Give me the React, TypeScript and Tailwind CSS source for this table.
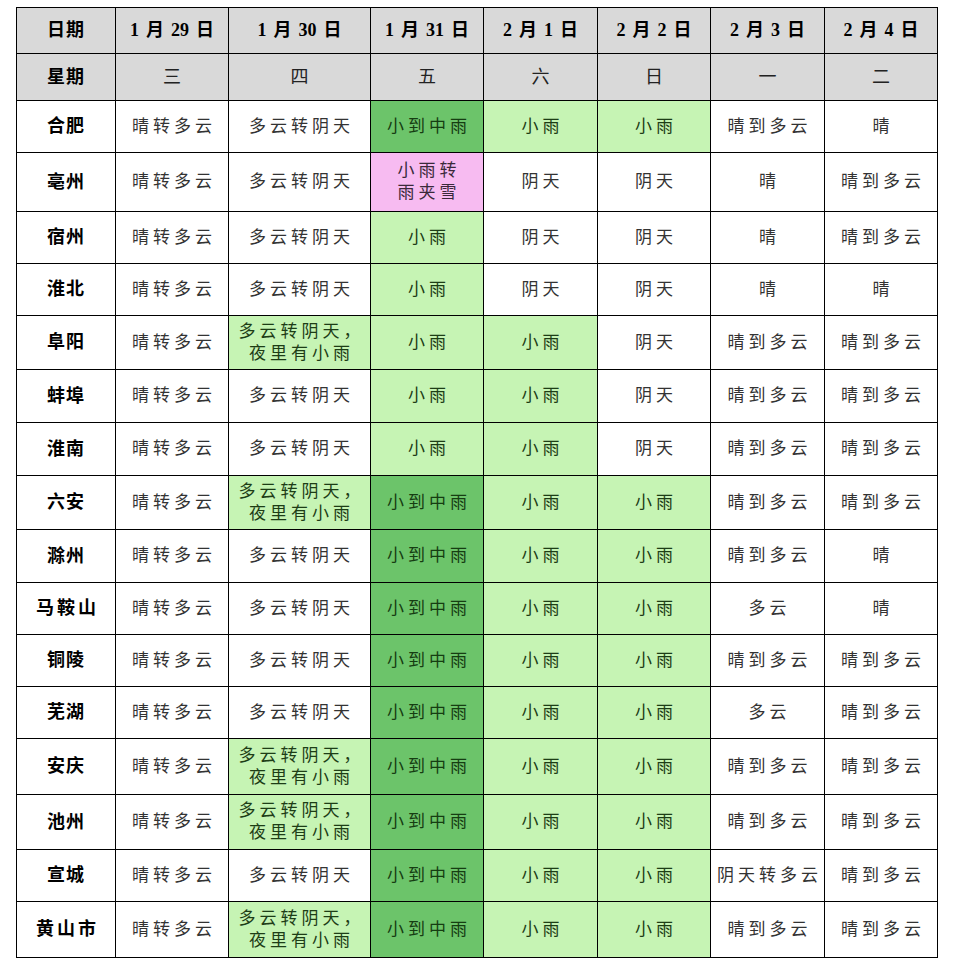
type Tone = 'w' | 'l' | 'd' | 'p';

type Cell = { t: string; tone?: Tone };

const toneClass: Record<Tone, string> = {
  w: 'bg-white text-[#333333]',
  l: 'bg-[#c6f4b4] text-[#1d3d16]',
  d: 'bg-[#6cc46a] text-[#163d12]',
  p: 'bg-[#f7bbf1] text-[#3a2a3a]',
};

const dates = ['1 月 29 日', '1 月 30 日', '1 月 31 日', '2 月 1 日', '2 月 2 日', '2 月 3 日', '2 月 4 日'];
const weekdays = ['三', '四', '五', '六', '日', '一', '二'];

const NIGHT = '多云转阴天，\n夜里有小雨';

const rows: { city: string; h: string; cells: Cell[] }[] = [
  { city: '合肥', h: 'h-[52px]', cells: [{ t: '晴转多云' }, { t: '多云转阴天' }, { t: '小到中雨', tone: 'd' }, { t: '小雨', tone: 'l' }, { t: '小雨', tone: 'l' }, { t: '晴到多云' }, { t: '晴' }] },
  { city: '亳州', h: 'h-[59px]', cells: [{ t: '晴转多云' }, { t: '多云转阴天' }, { t: '小雨转\n雨夹雪', tone: 'p' }, { t: '阴天' }, { t: '阴天' }, { t: '晴' }, { t: '晴到多云' }] },
  { city: '宿州', h: 'h-[52px]', cells: [{ t: '晴转多云' }, { t: '多云转阴天' }, { t: '小雨', tone: 'l' }, { t: '阴天' }, { t: '阴天' }, { t: '晴' }, { t: '晴到多云' }] },
  { city: '淮北', h: 'h-[52px]', cells: [{ t: '晴转多云' }, { t: '多云转阴天' }, { t: '小雨', tone: 'l' }, { t: '阴天' }, { t: '阴天' }, { t: '晴' }, { t: '晴' }] },
  { city: '阜阳', h: 'h-[54px]', cells: [{ t: '晴转多云' }, { t: NIGHT, tone: 'l' }, { t: '小雨', tone: 'l' }, { t: '小雨', tone: 'l' }, { t: '阴天' }, { t: '晴到多云' }, { t: '晴到多云' }] },
  { city: '蚌埠', h: 'h-[53px]', cells: [{ t: '晴转多云' }, { t: '多云转阴天' }, { t: '小雨', tone: 'l' }, { t: '小雨', tone: 'l' }, { t: '阴天' }, { t: '晴到多云' }, { t: '晴到多云' }] },
  { city: '淮南', h: 'h-[53px]', cells: [{ t: '晴转多云' }, { t: '多云转阴天' }, { t: '小雨', tone: 'l' }, { t: '小雨', tone: 'l' }, { t: '阴天' }, { t: '晴到多云' }, { t: '晴到多云' }] },
  { city: '六安', h: 'h-[54px]', cells: [{ t: '晴转多云' }, { t: NIGHT, tone: 'l' }, { t: '小到中雨', tone: 'd' }, { t: '小雨', tone: 'l' }, { t: '小雨', tone: 'l' }, { t: '晴到多云' }, { t: '晴到多云' }] },
  { city: '滁州', h: 'h-[53px]', cells: [{ t: '晴转多云' }, { t: '多云转阴天' }, { t: '小到中雨', tone: 'd' }, { t: '小雨', tone: 'l' }, { t: '小雨', tone: 'l' }, { t: '晴到多云' }, { t: '晴' }] },
  { city: '马鞍山', h: 'h-[52px]', cells: [{ t: '晴转多云' }, { t: '多云转阴天' }, { t: '小到中雨', tone: 'd' }, { t: '小雨', tone: 'l' }, { t: '小雨', tone: 'l' }, { t: '多云' }, { t: '晴' }] },
  { city: '铜陵', h: 'h-[52px]', cells: [{ t: '晴转多云' }, { t: '多云转阴天' }, { t: '小到中雨', tone: 'd' }, { t: '小雨', tone: 'l' }, { t: '小雨', tone: 'l' }, { t: '晴到多云' }, { t: '晴到多云' }] },
  { city: '芜湖', h: 'h-[52px]', cells: [{ t: '晴转多云' }, { t: '多云转阴天' }, { t: '小到中雨', tone: 'd' }, { t: '小雨', tone: 'l' }, { t: '小雨', tone: 'l' }, { t: '多云' }, { t: '晴到多云' }] },
  { city: '安庆', h: 'h-[56px]', cells: [{ t: '晴转多云' }, { t: NIGHT, tone: 'l' }, { t: '小到中雨', tone: 'd' }, { t: '小雨', tone: 'l' }, { t: '小雨', tone: 'l' }, { t: '晴到多云' }, { t: '晴到多云' }] },
  { city: '池州', h: 'h-[55px]', cells: [{ t: '晴转多云' }, { t: NIGHT, tone: 'l' }, { t: '小到中雨', tone: 'd' }, { t: '小雨', tone: 'l' }, { t: '小雨', tone: 'l' }, { t: '晴到多云' }, { t: '晴到多云' }] },
  { city: '宣城', h: 'h-[52px]', cells: [{ t: '晴转多云' }, { t: '多云转阴天' }, { t: '小到中雨', tone: 'd' }, { t: '小雨', tone: 'l' }, { t: '小雨', tone: 'l' }, { t: '阴天转多云' }, { t: '晴到多云' }] },
  { city: '黄山市', h: 'h-[56px]', cells: [{ t: '晴转多云' }, { t: NIGHT, tone: 'l' }, { t: '小到中雨', tone: 'd' }, { t: '小雨', tone: 'l' }, { t: '小雨', tone: 'l' }, { t: '晴到多云' }, { t: '晴到多云' }] },
];

const colWidths = ['w-[99px]', 'w-[113px]', 'w-[142px]', 'w-[113px]', 'w-[114px]', 'w-[113px]', 'w-[114px]', 'w-[113px]'];

const cellBase = 'border-[1.5px] border-black text-center align-middle p-0';

function BodyCell({ cell }: { cell: Cell }) {
  const lines = cell.t.split('\n');
  return (
    <td className={`${cellBase} ${toneClass[cell.tone ?? 'w']} text-[17px] leading-[22px] tracking-[4px] whitespace-nowrap`}>
      <div className="pl-[4px]">
        {lines.map((line, i) => (
          <div key={i}>{line}</div>
        ))}
      </div>
    </td>
  );
}

export default function App() {
  return (
    <div className="min-h-screen bg-white pl-[16px] pt-[7px] font-['Liberation_Serif','Noto_Sans_CJK_SC',serif]">
      <table className="table-fixed border-collapse border-[1.5px] border-black w-[921px]">
        <colgroup>
          {colWidths.map((w, i) => (
            <col key={i} className={w} />
          ))}
        </colgroup>
        <thead>
          <tr className="h-[46px] bg-[#d9d9d9] text-black">
            <th className={`${cellBase} text-[18px] font-bold tracking-[1px]`}>日期</th>
            {dates.map(d => (
              <th key={d} className={`${cellBase} text-[18px] font-bold`}>
                <div className="flex justify-center items-center gap-[7px]">
                  {d.split(' ').map((part, i) => (
                    <span key={i}>{part}</span>
                  ))}
                </div>
              </th>
            ))}
          </tr>
          <tr className="h-[47px] bg-[#d9d9d9] text-black">
            <th className={`${cellBase} text-[18px] font-bold tracking-[1px]`}>星期</th>
            {weekdays.map(w => (
              <th key={w} className={`${cellBase} text-[18px] font-normal text-[#222222]`}>
                {w}
              </th>
            ))}
          </tr>
        </thead>
        <tbody>
          {rows.map(row => (
            <tr key={row.city} className={row.h}>
              <td
                className={`${cellBase} bg-white text-black text-[18px] font-bold ${row.city.length > 2 ? 'tracking-[3px] pl-[3px]' : 'tracking-[1px]'}`}
              >
                {row.city}
              </td>
              {row.cells.map((c, i) => (
                <BodyCell key={i} cell={c} />
              ))}
            </tr>
          ))}
        </tbody>
      </table>
    </div>
  );
}
